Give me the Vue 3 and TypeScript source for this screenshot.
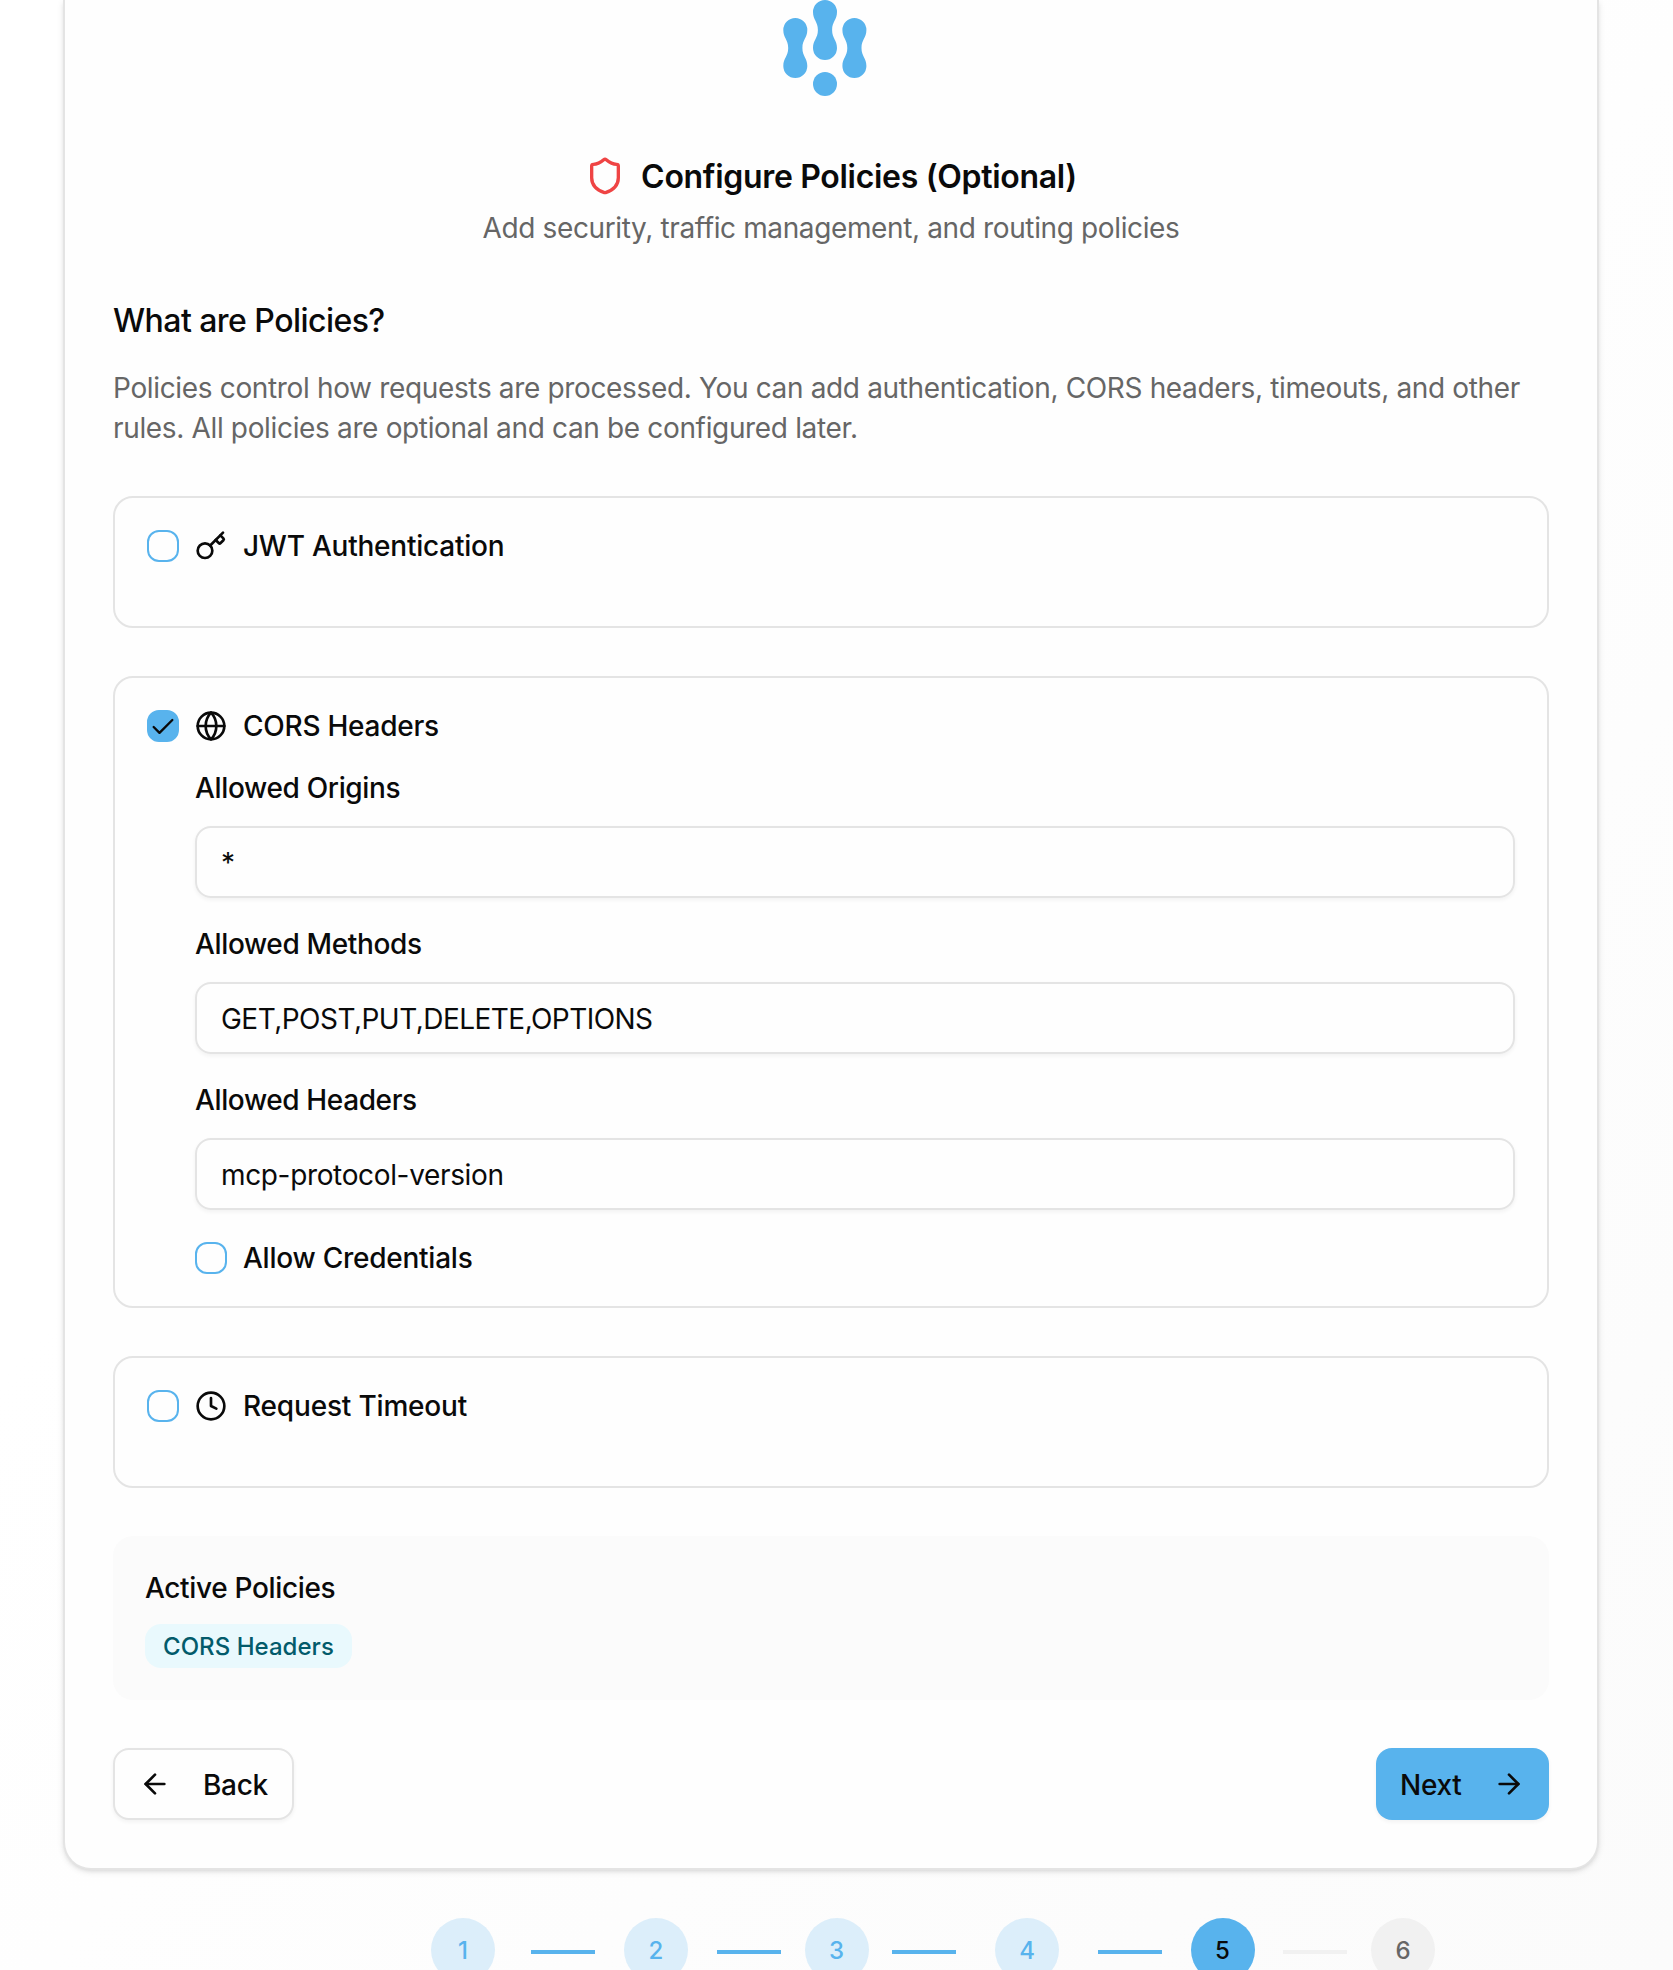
<script setup lang="ts">
import { reactive } from 'vue'

interface Step {
  id: number
  state: 'done' | 'current' | 'upcoming'
  width: number
}

interface Field {
  label: string
  value: string
  labelSpacing: number
  valueSpacing: number
}

const fields: Field[] = [
  { label: 'Allowed Origins', value: '*', labelSpacing: -0.34, valueSpacing: 0 },
  { label: 'Allowed Methods', value: 'GET,POST,PUT,DELETE,OPTIONS', labelSpacing: -0.36, valueSpacing: -0.54 },
  { label: 'Allowed Headers', value: 'mcp-protocol-version', labelSpacing: -0.38, valueSpacing: -0.35 },
]

const enabled = reactive({ jwt: false, cors: true, credentials: false, timeout: false })

const steps: Step[] = [
  { id: 1, state: 'done', width: 104 },
  { id: 2, state: 'done', width: 90 },
  { id: 3, state: 'done', width: 79 },
  { id: 4, state: 'done', width: 110 },
  { id: 5, state: 'current', width: 89 },
  { id: 6, state: 'upcoming', width: 80 },
]
</script>

<template>
  <div class="page">
    <main class="card">
      <svg class="logo" width="84" height="96" viewBox="0 0 84 96" fill="currentColor" aria-hidden="true">
        <path d="M12.3 18a12 12 0 0 0-12 12c0 8 4.9 9.5 4.9 18s-4.9 10-4.9 18a12 12 0 0 0 24 0c0-8-4.9-9.5-4.9-18s4.9-10 4.9-18a12 12 0 0 0-12-12z" />
        <path d="M42 0a12 12 0 0 0-12 12c0 8 4.9 9.5 4.9 18s-4.9 10-4.9 18a12 12 0 0 0 24 0c0-8-4.9-9.5-4.9-18s4.9-10 4.9-18a12 12 0 0 0-12-12z" />
        <path d="M71.4 18a12 12 0 0 0-12 12c0 8 4.9 9.5 4.9 18s-4.9 10-4.9 18a12 12 0 0 0 24 0c0-8-4.9-9.5-4.9-18s4.9-10 4.9-18a12 12 0 0 0-12-12z" />
        <circle cx="42" cy="84" r="12" />
      </svg>

      <header class="head">
        <h1 class="title">
          <svg class="icon shield" width="40" height="40" viewBox="0 0 24 24">
            <path d="M20 13c0 5-3.5 7.5-7.66 8.95a1 1 0 0 1-.67-.01C7.5 20.5 4 18 4 13V6a1 1 0 0 1 1-1c2 0 4.5-1.2 6.24-2.72a1.17 1.17 0 0 1 1.52 0C14.51 3.81 17 5 19 5a1 1 0 0 1 1 1z" />
          </svg>
          <span>Configure Policies (Optional)</span>
        </h1>
        <p class="subtitle">Add security, traffic management, and routing policies</p>
      </header>

      <section class="intro">
        <h2>What are Policies?</h2>
        <p>Policies control how requests are processed. You can add authentication, CORS headers, timeouts, and other<br />rules. All policies are optional and can be configured later.</p>
      </section>

      <section class="policy">
        <div class="row">
          <button class="check" role="checkbox" :aria-checked="enabled.jwt"></button>
          <svg class="icon" width="32" height="32" viewBox="0 0 24 24">
            <path d="m15.5 7.5 2.3 2.3a1 1 0 0 0 1.4 0l2.1-2.1a1 1 0 0 0 0-1.4L19 4" />
            <path d="m21 2-9.6 9.6" />
            <circle cx="7.5" cy="15.5" r="5.5" />
          </svg>
          <span class="label wide">JWT Authentication</span>
        </div>
      </section>

      <section class="policy open">
        <div class="row">
          <button class="check on" role="checkbox" :aria-checked="enabled.cors">
            <svg class="icon" width="28" height="28" viewBox="0 0 24 24"><path d="M20 6 9 17l-5-5" /></svg>
          </button>
          <svg class="icon" width="32" height="32" viewBox="0 0 24 24">
            <circle cx="12" cy="12" r="10" />
            <path d="M12 2a14.5 14.5 0 0 0 0 20 14.5 14.5 0 0 0 0-20" />
            <path d="M2 12h20" />
          </svg>
          <span class="label wide">CORS Headers</span>
        </div>
        <div class="fields">
          <div v-for="f in fields" :key="f.label" class="field">
            <div class="label" :style="{ letterSpacing: f.labelSpacing + 'px' }">{{ f.label }}</div>
            <div class="input" :style="{ letterSpacing: f.valueSpacing + 'px' }">{{ f.value }}</div>
          </div>
          <div class="row">
            <button class="check" role="checkbox" :aria-checked="enabled.credentials"></button>
            <span class="label wide">Allow Credentials</span>
          </div>
        </div>
      </section>

      <section class="policy">
        <div class="row">
          <button class="check" role="checkbox" :aria-checked="enabled.timeout"></button>
          <svg class="icon" width="32" height="32" viewBox="0 0 24 24">
            <circle cx="12" cy="12" r="10" />
            <path d="M12 6v6l4 2" />
          </svg>
          <span class="label timeout">Request Timeout</span>
        </div>
      </section>

      <section class="active">
        <h3>Active Policies</h3>
        <span class="badge">CORS Headers</span>
      </section>

      <footer class="actions">
        <button class="btn outline">
          <svg class="icon" width="32" height="32" viewBox="0 0 24 24"><path d="m12 19-7-7 7-7" /><path d="M19 12H5" /></svg>
          <span>Back</span>
        </button>
        <button class="btn primary">
          <span>Next</span>
          <svg class="icon" width="32" height="32" viewBox="0 0 24 24"><path d="M5 12h14" /><path d="m12 5 7 7-7 7" /></svg>
        </button>
      </footer>
    </main>

    <nav class="steps">
      <template v-for="(s, i) in steps" :key="s.id">
        <div class="step" :style="{ width: s.width + 'px' }">
          <span class="dot" :class="s.state">{{ s.id }}</span>
        </div>
        <span v-if="i < steps.length - 1" class="line" :class="{ muted: s.state === 'current' }"></span>
      </template>
    </nav>
  </div>
</template>

<style scoped>
.page {
  box-sizing: border-box;
  width: 1673px;
  height: 1970px;
  padding-left: 63px;
  overflow: hidden;
  background: linear-gradient(to bottom right, #fff 0%, #fff 35%, #fbfbfb 100%);
  color: #0a0a0a;
  font: 400 28px/40px Inter, "Liberation Sans", sans-serif;
}
.page * {
  box-sizing: border-box;
}
h1, h2, h3, p {
  margin: 0;
  font-weight: 500;
}
.icon {
  flex: none;
  display: block;
  fill: none;
  stroke: currentColor;
  stroke-width: 2;
  stroke-linecap: round;
  stroke-linejoin: round;
}
.card {
  width: 1536px;
  height: 1870px;
  padding: 0 48px 48px;
  border: 2px solid #e4e4e4;
  border-top: 0;
  border-radius: 0 0 28px 28px;
  background: #fefefe;
  box-shadow: 0 2px 6px rgba(0, 0, 0, 0.1), 0 2px 4px -2px rgba(0, 0, 0, 0.1);
  display: flex;
  flex-direction: column;
}
.logo {
  flex: none;
  align-self: center;
  margin-right: 12px;
  color: #58b3ed;
}
.head {
  margin-top: 60px;
  display: flex;
  flex-direction: column;
  align-items: center;
  gap: 12px;
}
.title {
  display: flex;
  align-items: center;
  gap: 16px;
  height: 40px;
  font-size: 32px;
  font-weight: 600;
  letter-spacing: -0.31px;
}
.title span {
  padding-top: 2px;
}
.shield {
  color: #ef4444;
}
.subtitle {
  font-weight: 400;
  letter-spacing: -0.37px;
  color: #666;
}
.intro {
  margin-top: 53px;
}
.intro h2 {
  font-size: 32px;
  letter-spacing: -0.54px;
}
.intro p {
  margin-top: 27px;
  font-weight: 400;
  letter-spacing: -0.346px;
  color: #666;
  white-space: nowrap;
}
.policy {
  flex: none;
  height: 132px;
  margin-top: 48px;
  padding: 32px;
  border: 2px solid #e4e4e4;
  border-radius: 20px;
}
.policy.open {
  height: 632px;
}
.row {
  display: flex;
  align-items: center;
  gap: 16px;
  height: 32px;
}
.check {
  width: 32px;
  height: 32px;
  padding: 0;
  border: 2px solid #58b3ed;
  border-radius: 12px;
  background: #fefefe;
  color: #0a0a0a;
  display: flex;
  align-items: center;
  justify-content: center;
}
.check.on {
  background: #58b3ed;
}
.check.on .icon {
  margin-top: 2px;
}
.label {
  font-weight: 500;
  line-height: 28px;
}
.label.wide {
  letter-spacing: -0.24px;
}
.label.timeout {
  letter-spacing: -0.18px;
}
.fields {
  margin: 32px 0 0 48px;
  display: flex;
  flex-direction: column;
  gap: 32px;
}
.field {
  display: flex;
  flex-direction: column;
  gap: 24px;
}
.input {
  height: 72px;
  padding: 1px 24px 0;
  border: 2px solid #e4e4e4;
  border-radius: 16px;
  box-shadow: 0 2px 4px rgba(0, 0, 0, 0.05);
  display: flex;
  align-items: center;
}
.active {
  flex: none;
  height: 164px;
  margin-top: 48px;
  padding: 32px;
  border-radius: 20px;
  background: #fbfbfb;
  display: flex;
  flex-direction: column;
  align-items: flex-start;
  gap: 16px;
}
.active h3 {
  font-size: 28px;
  letter-spacing: -0.34px;
}
.badge {
  height: 44px;
  padding: 1px 18px 0;
  border-radius: 16px;
  background: #e9f9fd;
  color: #035b6b;
  font-size: 24px;
  font-weight: 500;
  line-height: 44px;
  letter-spacing: 0.04px;
}
.actions {
  margin-top: 48px;
  display: flex;
  justify-content: space-between;
}
.btn {
  height: 72px;
  padding: 0 24px;
  border: 0;
  border-radius: 16px;
  color: #0a0a0a;
  font: 500 28px/40px Inter, "Liberation Sans", sans-serif;
  letter-spacing: -0.3px;
  box-shadow: 0 2px 4px rgba(0, 0, 0, 0.05);
  display: flex;
  align-items: center;
  gap: 32px;
}
.btn span {
  padding-top: 1px;
}
.btn.outline {
  width: 181px;
  border: 2px solid #e4e4e4;
  background: #fefefe;
}
.btn.primary {
  width: 173px;
  background: #58b3ed;
}
.steps {
  margin: 48px 0 0 348px;
  display: flex;
  align-items: flex-start;
  gap: 16px;
}
.step {
  flex: none;
  display: flex;
  justify-content: center;
}
.dot {
  flex: none;
  width: 64px;
  height: 64px;
  border-radius: 50%;
  font-size: 24px;
  font-weight: 500;
  line-height: 65px;
  text-align: center;
}
.dot.done {
  background: #dceefa;
  color: #58b3ed;
}
.dot.current {
  background: #58b3ed;
}
.dot.upcoming {
  background: #f1f1f1;
  color: #666;
}
.line {
  flex: none;
  width: 64px;
  height: 4px;
  margin-top: 32px;
  background: #58b3ed;
}
.line.muted {
  background: #f1f1f1;
}
</style>
